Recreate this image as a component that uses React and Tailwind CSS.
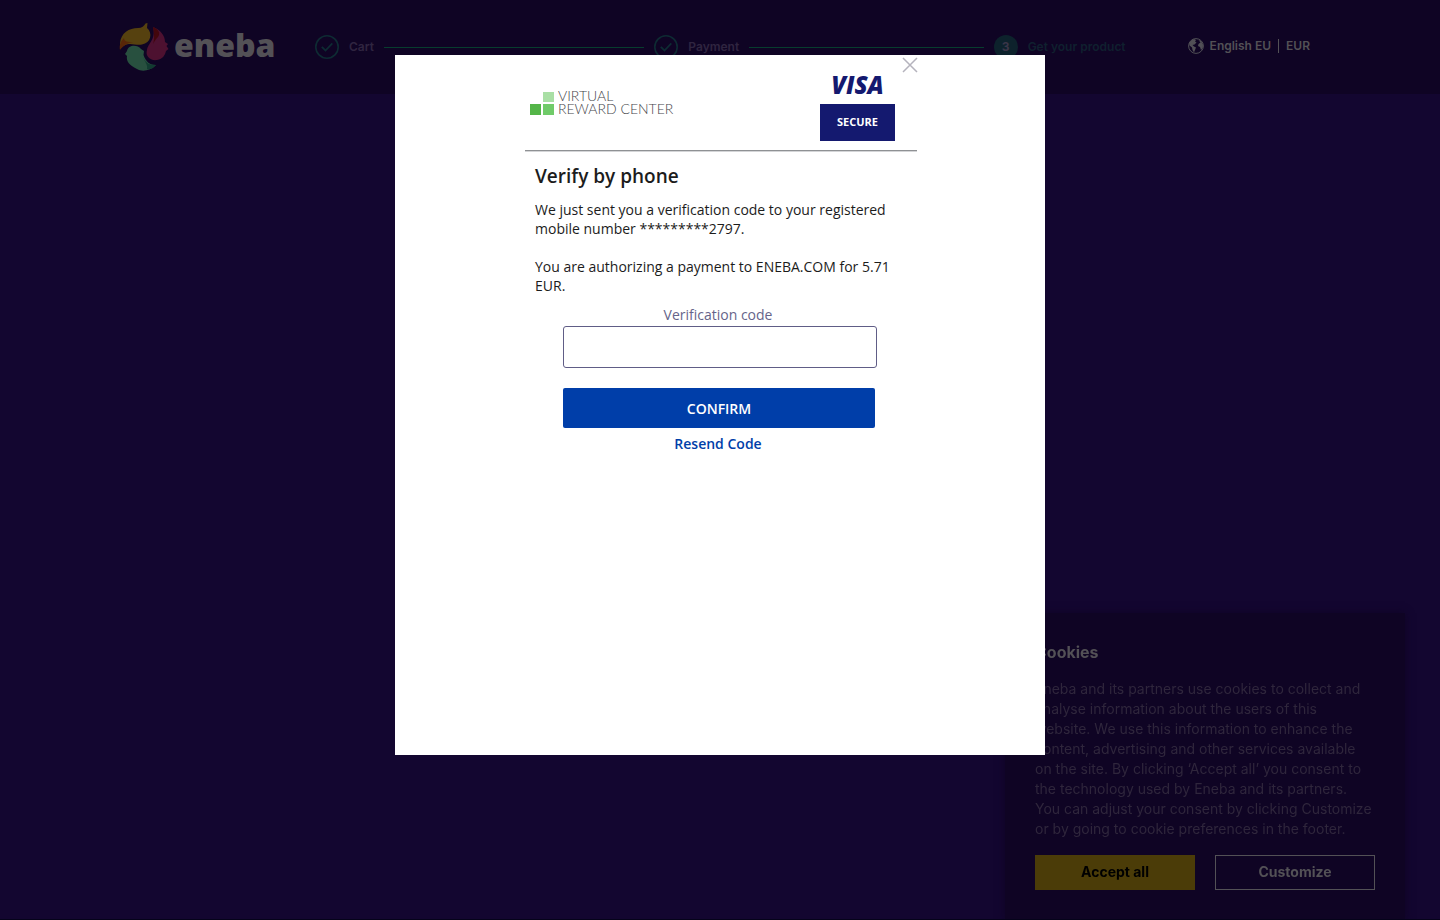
const sans = "font-['Inter','Liberation_Sans',sans-serif]";

function CheckCircle() {
  return (
    <svg viewBox="0 0 24 24" className="size-6 shrink-0" fill="none" stroke="#0e2b33" aria-hidden="true">
      <circle cx="12" cy="12" r="11.200" strokeWidth="1.600" />
      <path d="M6.800 11.800 L10.500 15.500 L17.300 8.400" strokeWidth="1.800" />
    </svg>
  );
}

function BrandMark() {
  return (
    <svg viewBox="0 0 50 50" className="size-[50px] shrink-0" aria-hidden="true">
      <path d="M1 21 C2 11 10 6 19 6 C23 6 25 4 26.500 1.500 L28.500 1 L28 6 C34 11 32 21 23 22.500 C15 24 9 18 1 27 Z" fill="#56410f" />
      <path d="M1 28 C0 23 2 19 5 16 C5 20 9 20 14 20 C8 21 4 24 1 28 Z" fill="#582608" />
      <path d="M34 5 C42 8 46 14 46 20 L49 22 L47.500 24 L49.500 27 L47 29 C46 33 44 37 38 38 C31 39 26 34 28 28 C29 21 37 18 34 5 Z" fill="#4d1130" />
      <path d="M34 5 C39 7 42 11 39 15 C36 18 35 20 34 22 C36 16 35 11 34 5 Z" fill="#43060c" />
      <path d="M8 29 C9 23 18 22 22 27 L25 29 L24.500 33 C27 40 31 43 37 43 C31 49 23 50 18 47 C10 43 7 39 8 34 L6 32 Z" fill="#28503f" />
      <path d="M24 35 C27 42 31 43 37 43 C34 47 31 48 28 47 C29 43 26 40 24 35 Z" fill="#123b31" />
    </svg>
  );
}

function Globe() {
  return (
    <svg viewBox="0 0 16 16" className="size-4 shrink-0" aria-hidden="true">
      <circle cx="8" cy="8" r="7.400" fill="none" stroke="#515056" strokeWidth="1" />
      <path d="M1 5 L3 2.500 L6 1 L8 2 L7 3.500 L8.500 4.500 L6.500 6.500 L4.500 7 L6 8.500 L8 9.500 L7 12 L6 14.500 L4.500 12 L4 9.500 L1.500 7.500 Z" fill="#515056" />
      <path d="M10.500 2 L13 3 L15 6.500 L14.800 10 L13 12 L12 9 L10 8 L10.500 6 L12.500 4.500 Z" fill="#515056" />
    </svg>
  );
}

function Header() {
  return (
    <header className={`flex h-[94px] items-center bg-[#0f0424] pl-[119px] pr-[130px] text-xs font-semibold ${sans}`}>
      <a href="#home" className="flex items-center gap-[5px] text-[#535156]">
        <BrandMark />
        <span className="w-[141px] pb-1 font-['Open_Sans','Noto_Sans',sans-serif] text-[32px] font-extrabold leading-none">eneba</span>
      </a>
      <ol className="flex flex-1 items-center gap-[10px] text-[#2f2540]">
        <li className="flex flex-1 items-center gap-[10px]">
          <CheckCircle />
          <span>Cart</span>
          <span className="h-px flex-1 bg-[#073d2e]" />
        </li>
        <li className="flex flex-1 items-center gap-[10px]">
          <CheckCircle />
          <span>Payment</span>
          <span className="h-px flex-1 bg-[#073d2e]" />
        </li>
        <li className="flex min-w-[134px] items-center gap-[10px] text-[#10202f]">
          <span className="flex size-6 items-center justify-center rounded-full bg-[#0d222c] font-bold text-[#3a3548]">3</span>
          <span>Get your product</span>
        </li>
      </ol>
      <button type="button" className="ml-[60px] flex items-center gap-[6px] whitespace-nowrap pb-[2px] text-[#535156]">
        <Globe />
        <span>English EU</span>
        <span className="mx-px h-[14px] w-px bg-[#535156]" />
        <span>EUR</span>
      </button>
    </header>
  );
}

function CookiePanel() {
  return (
    <section aria-label="Cookies" className={`fixed bottom-0 right-[35px] w-[400px] bg-[#0f0424] px-[30px] pb-[30px] pt-[27px] shadow-[0_0_8px_#0f0424] ${sans}`}>
      <h2 className="text-base font-bold leading-6 text-[#535156]">Cookies</h2>
      <p className="mt-[15px] whitespace-nowrap text-sm leading-5 text-[#2f263c]">
        Eneba and its partners use cookies to collect and<br />
        analyse information about the users of this<br />
        website. We use this information to enhance the<br />
        content, advertising and other services available<br />
        on the site. By clicking ‘Accept all’ you consent to<br />
        the technology used by Eneba and its partners.<br />
        You can adjust your consent by clicking Customize<br />
        or by going to cookie preferences in the footer.
      </p>
      <div className="mt-4 grid grid-cols-2 gap-5 text-sm font-bold">
        <button type="button" className="h-[35px] bg-[#4b3c08] pb-[2px] text-black">Accept all</button>
        <button type="button" className="h-[35px] border border-[#535156] pb-[2px] text-[#535156]">Customize</button>
      </div>
    </section>
  );
}

function RewardLogo() {
  return (
    <div className="flex items-end gap-1">
      <svg viewBox="0 0 24 24" className="size-6" aria-hidden="true">
        <rect x="13" y="1" width="11" height="10" fill="#a9dfa5" />
        <rect x="0" y="13" width="11" height="11" fill="#54b548" />
        <rect x="13" y="13" width="11" height="11" fill="#70cb69" />
      </svg>
      <p className="whitespace-nowrap font-['Lato','Liberation_Sans',sans-serif] text-sm font-light leading-[13px] text-[#45464a]">
        <span className="block">VIRTUAL</span>
        <span className="block">REWARD CENTER</span>
      </p>
    </div>
  );
}

function VisaSecure() {
  return (
    <div className="w-[75px] text-center font-['Open_Sans','Noto_Sans',sans-serif] text-[#14196f]">
      <p className="pb-1 text-2xl font-extrabold italic leading-[30px]">VISA</p>
      <p className="h-[37px] bg-[#14196f] text-[11px] font-bold leading-9 text-white">SECURE</p>
    </div>
  );
}

function VerifyDialog() {
  return (
    <div className="fixed inset-0 flex items-start justify-center border-b border-[#05031a] pt-[55px]">
      <div role="dialog" aria-modal="true" aria-labelledby="verify-title" className="relative min-h-[700px] w-[650px] max-w-full bg-white px-[130px] font-['Open_Sans','Noto_Sans',sans-serif] text-sm text-[#1c1c1c]">
        <button type="button" aria-label="Close" className="absolute right-[127px] top-[2px]">
          <svg viewBox="0 0 16 16" className="size-4" fill="none" stroke="#b5b3bd" strokeWidth="1.500">
            <path d="M1 1 L15 15 M15 1 L1 15" />
          </svg>
        </button>
        <div className="flex h-[95px] items-start justify-between pl-[5px] pr-5">
          <div className="pt-[34px]"><RewardLogo /></div>
          <div className="pt-[15px]"><VisaSecure /></div>
        </div>
        <hr className="-mr-[2px] h-[2px] border-b border-t border-b-[#d4d5d7] border-t-[#8f9194]" />
        <div className="px-[10px] pt-[10px]">
          <h1 id="verify-title" className="text-[19px] font-semibold leading-7">Verify by phone</h1>
          <p className="mt-[10px] leading-[19px]">We just sent you a verification code to your registered mobile number *********2797.</p>
          <p className="mt-[19px] leading-[19px]">You are authorizing a payment to ENEBA.COM for 5.71 EUR.</p>
        </div>
        <form className="px-[38px] pt-[10px]" onSubmit={(e) => e.preventDefault()}>
          <label htmlFor="code" className="block pr-1 text-center leading-[19px] text-[#66648a]">Verification code</label>
          <input id="code" type="text" className="mt-[2px] block h-[42px] w-full rounded-[3px] border border-[#605d86] px-3" />
          <div className="flex flex-col pr-[2px] pt-5">
            <button type="submit" className="h-10 rounded-[2px] bg-[#003ea9] pt-[2px] font-semibold text-white">CONFIRM</button>
            <button type="button" className="mt-[6px] self-center pr-[2px] font-semibold leading-5 text-[#003ea9]">Resend Code</button>
          </div>
        </form>
      </div>
    </div>
  );
}

export default function App() {
  return (
    <main className="min-h-screen bg-[#130630]">
      <Header />
      <CookiePanel />
      <VerifyDialog />
    </main>
  );
}
